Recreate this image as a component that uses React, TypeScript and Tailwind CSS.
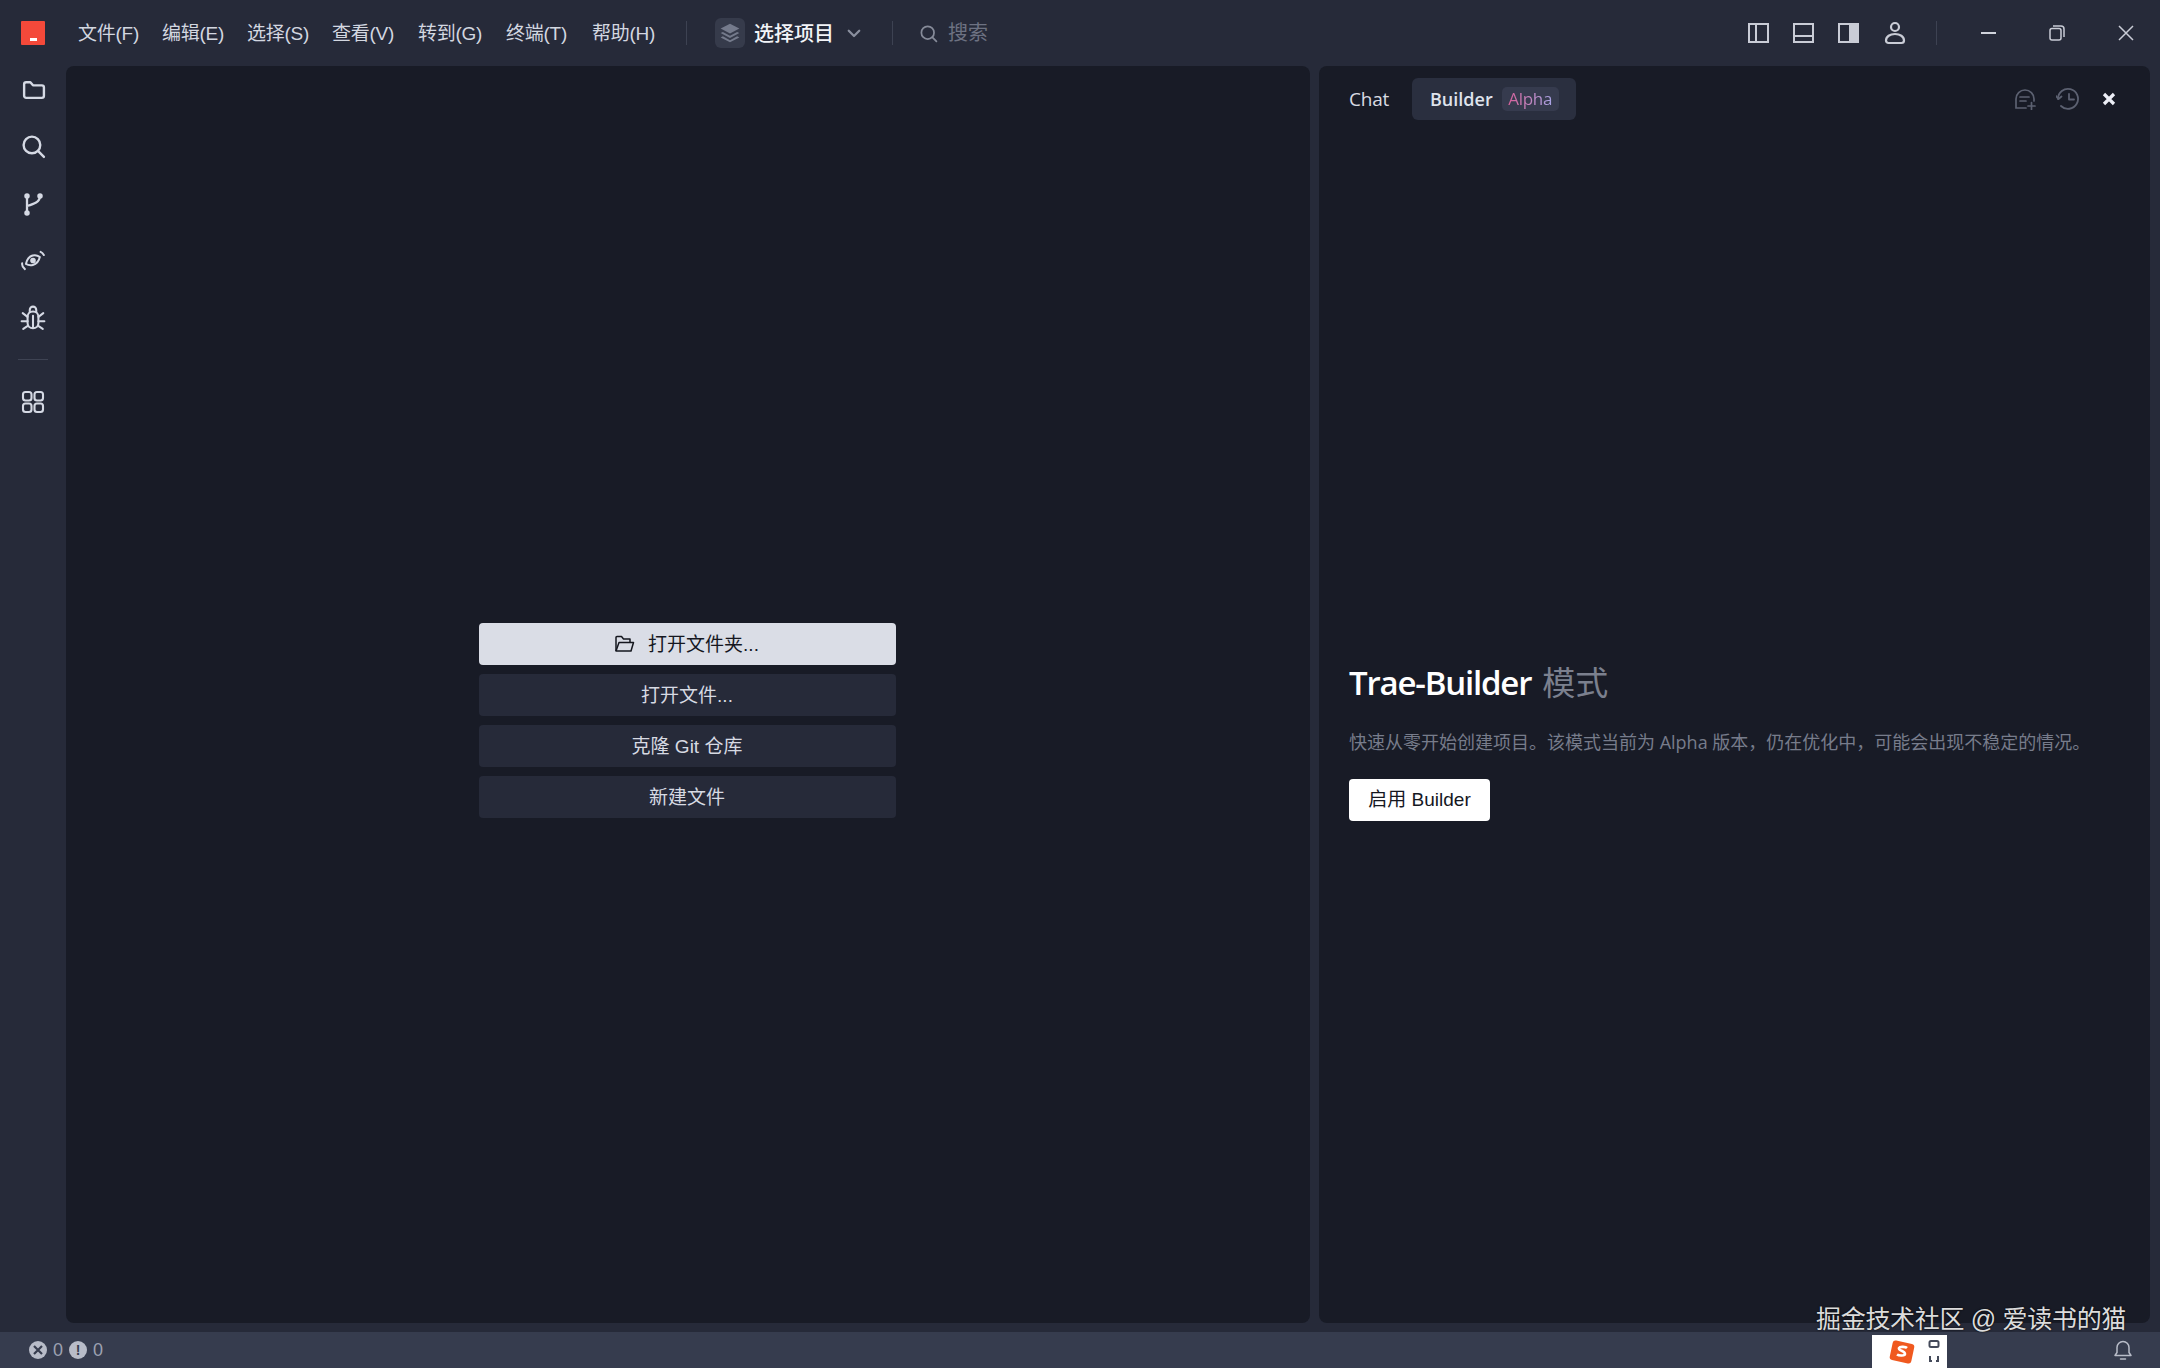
import React from "react";

const menus = [
  { t: "文件(F)", w: "w-[84px]" },
  { t: "编辑(E)", w: "w-[85px]" },
  { t: "选择(S)", w: "w-[85px]" },
  { t: "查看(V)", w: "w-[86px]" },
  { t: "转到(G)", w: "w-[88px]" },
  { t: "终端(T)", w: "w-[86px]" },
  { t: "帮助(H)", w: "w-[64px]" },
];

const Ico = ({ size = 24, sw = 2, className = "", children }: { size?: number; sw?: number; className?: string; children: React.ReactNode }) => (
  <svg width={size} height={size} viewBox="0 0 24 24" fill="none" stroke="currentColor" strokeWidth={sw} strokeLinecap="round" strokeLinejoin="round" className={className}>
    {children}
  </svg>
);

const Side = ({ className = "", children }: { className?: string; children: React.ReactNode }) => (
  <div className={`flex h-[57px] w-full items-center justify-center text-[#d5d9e4] ${className}`}>{children}</div>
);

const cjk = "font-['Liberation_Sans','Noto_Sans_CJK_SC',sans-serif]";

export default function App() {
  return (
    <div className={`relative flex h-[1368px] w-[2160px] flex-col overflow-hidden bg-[#262a39] ${cjk}`}>
      <header className="flex h-[66px] shrink-0 items-center">
        <div className="ml-[21px] flex h-[24px] w-[24px] items-end justify-center rounded-[1px] bg-[#f4493a] pb-[4px] pl-[1px]">
          <div className="h-[3px] w-[7px] bg-white" />
        </div>
        <nav className="ml-[33px] mt-[2px] flex w-[600px] text-[19px] leading-[28px] tracking-[-0.25px] text-[#d3d7e0]">
          {menus.map((m) => (
            <span key={m.t} className={`${m.w} shrink-0 whitespace-nowrap`}>{m.t}</span>
          ))}
        </nav>
        <div className="ml-[8px] h-[24px] w-px bg-[#3d4252]" />
        <div className="ml-[28px] flex h-[30px] w-[30px] items-center justify-center rounded-[6px] bg-[#363b4b] text-[#757b8c]">
          <svg width="22" height="22" viewBox="0 0 20 20" fill="currentColor">
            <path d="M10 1.500 18.500 6 10 10.500 1.500 6z" />
            <path d="M3.500 9 10 12.500 16.500 9 18.500 10 10 14.500 1.500 10z" />
            <path d="M3.500 13 10 16.500 16.500 13 18.500 14 10 18.500 1.500 14z" />
          </svg>
        </div>
        <span className="ml-[9px] mt-[2px] w-[80px] whitespace-nowrap text-[20px] font-medium leading-[28px] text-[#f2f4f8]">选择项目</span>
        <span className="ml-[11px] text-[#8a8f9e]">
          <Ico size={18} sw={3}><path d="m5 9 7 7 7-7" /></Ico>
        </span>
        <div className="ml-[29px] h-[24px] w-px bg-[#3d4252]" />
        <span className="ml-[26px] text-[#868b99]">
          <Ico size={19} sw={2.2}><circle cx="11" cy="11" r="8" /><path d="m17 17 5 5" /></Ico>
        </span>
        <span className="ml-[10px] text-[20px] leading-[28px] text-[#6d7282]">搜索</span>

        <div className="ml-auto flex items-center text-[#c9ccd6]">
          <svg width="22" height="22" viewBox="0 0 22 22" fill="none" stroke="currentColor" strokeWidth="2"><rect x="1" y="2" width="19" height="18" /><path d="M8 2v18" /></svg>
          <svg className="ml-[23px]" width="22" height="22" viewBox="0 0 22 22" fill="none" stroke="currentColor" strokeWidth="2"><rect x="1" y="2" width="19" height="18" /><path d="M1 14h19" /></svg>
          <svg className="ml-[23px]" width="22" height="22" viewBox="0 0 22 22" fill="none" stroke="currentColor" strokeWidth="2"><rect x="1" y="2" width="19" height="18" /><rect x="12" y="2" width="8" height="18" fill="currentColor" /></svg>
          <svg className="ml-[24px]" width="22" height="24" viewBox="0 0 22 24" fill="none" stroke="currentColor" strokeWidth="2.200"><circle cx="11" cy="6" r="4" /><path d="M2 19.500c0-4 4-6.500 9-6.500s9 2.500 9 6.500c0 1.500-1 2.500-2.500 2.500h-13C3 22 2 21 2 19.500z" /></svg>
          <div className="ml-[30px] h-[24px] w-px bg-[#3d4252]" />
          <div className="ml-[44px] h-[2px] w-[15px] bg-[#d0d3dc]" />
          <svg className="ml-[53px]" width="16" height="16" viewBox="0 0 16 16" fill="none" stroke="currentColor" strokeWidth="1.500"><rect x="1" y="3.500" width="11" height="11.500" rx="2" /><path d="M4 1h8a3 3 0 0 1 3 3v8" /></svg>
          <svg className="ml-[53px] mr-[26px]" width="16" height="16" viewBox="0 0 16 16" fill="none" stroke="currentColor" strokeWidth="1.500"><path d="m1 1 14 14M15 1 1 15" /></svg>
        </div>
      </header>

      <main className="flex min-h-0 flex-1">
        <aside className="flex w-[66px] shrink-0 flex-col items-center">
          <Side className="mt-[-5px]">
            <Ico size={25} sw={2.300}><path d="M3 7a2 2 0 0 1 2-2h4l2.500 3H20a2 2 0 0 1 2 2v8a2 2 0 0 1-2 2H5a2 2 0 0 1-2-2z" /></Ico>
          </Side>
          <Side>
            <Ico size={25} sw={2.300}><circle cx="10.500" cy="10.500" r="8" /><path d="m17 17 5 5" /></Ico>
          </Side>
          <Side>
            <Ico sw={2.300}><circle cx="6" cy="4" r="1.600" fill="currentColor" /><circle cx="6" cy="21" r="1.600" fill="currentColor" /><circle cx="19" cy="4" r="1.600" fill="currentColor" /><path d="M6 4v17M19 4c0 6-6 8-13 10" /></Ico>
          </Side>
          <Side>
            <Ico size={26} sw={1.800}><path d="M5 13c2-4 5-6 8-6s4.500 1 6 3c-2 4-5 5.500-8 5.500S6.500 14.500 5 13z" transform="rotate(-14 12 12)" /><circle cx="12" cy="11.500" r="1.700" fill="currentColor" /><path d="M19 3.500c1.300.6 2.300 1.600 3 3M2 14c-.3 2 .5 4 2.500 5.500" /></Ico>
          </Side>
          <Side>
            <Ico size={26} sw={1.900}><path d="M7 11c0-3 2.200-5 5-5s5 2 5 5v5.500c0 3-2.200 5-5 5s-5-2-5-5z" /><path d="M9 6.500V4.500a3 3 0 0 1 6 0v2M12 10v11M7 11 2.500 7.500M17 11l4.500-3.500M7 15H1.500M17 15h5.500M7.500 19l-4.500 3M16.500 19l4.500 3" /></Ico>
          </Side>
          <div className="mt-[13px] h-px w-[30px] bg-[#3e4353]" />
          <div className="mt-[30px] text-[#d5d9e4]">
            <Ico sw={2.100}><rect x="2" y="2" width="8.500" height="8.500" rx="2.500" /><rect x="13.500" y="2" width="8.500" height="8.500" rx="2.500" /><rect x="2" y="13.500" width="8.500" height="8.500" rx="2.500" /><rect x="13.500" y="13.500" width="8.500" height="8.500" rx="2.500" /></Ico>
          </div>
        </aside>

        <div className="mb-[9px] flex min-h-0 flex-1 gap-[9px] pr-[10px]">
          <section className="flex w-[1244px] shrink-0 flex-col items-center justify-start rounded-[8px] bg-[#181b26] pr-[2px] pt-[557px]">
            <div className="flex w-[417px] flex-col gap-[9px] text-[19px] text-[#d7dae3]">
              <button className="flex h-[42px] items-center justify-center rounded-[4px] bg-[#dadde6] text-[#15171f]">
                <svg className="mr-[13px]" width="20" height="18" viewBox="0 0 20 18" fill="none" stroke="currentColor" strokeWidth="1.500" strokeLinejoin="round"><path d="M1 16V2.500A1 1 0 0 1 2 1.500h4.500l2 2.500H15v3" /><path d="M1 16l3-8.500h14.500L16 16z" /></svg>
                <span className="mt-[2px]">打开文件夹...</span>
              </button>
              <button className="flex h-[42px] items-center justify-center rounded-[4px] bg-[#262a39] pt-[2px]">打开文件...</button>
              <button className="flex h-[42px] items-center justify-center rounded-[4px] bg-[#262a39] pt-[2px]">克隆 Git 仓库</button>
              <button className="flex h-[42px] items-center justify-center rounded-[4px] bg-[#262a39] pt-[2px]">新建文件</button>
            </div>
          </section>

          <section className="flex min-w-0 flex-1 flex-col rounded-[8px] bg-[#181b26] pl-[30px]">
            <div className="mt-[12px] flex h-[42px] shrink-0 items-center">
              <span className="mt-[1px] w-[40px] font-['Open_Sans','Noto_Sans_CJK_SC',sans-serif] text-[19px] tracking-[-0.2px] text-[#d8dbe3]">Chat</span>
              <div className="ml-[23px] flex h-[42px] w-[164px] items-center rounded-[6px] bg-[#2a2f3f] pl-[18px]">
                <span className="mt-[1px] font-['Open_Sans','Noto_Sans_CJK_SC',sans-serif] text-[18px] font-semibold text-[#dfe3ec]">Builder</span>
                <span className="ml-[9px] flex h-[24px] w-[57px] items-center justify-center rounded-[5px] bg-[#363b4e]">
                  <span className="bg-gradient-to-r from-[#d4609a] to-[#a8a4e6] bg-clip-text font-['Open_Sans',sans-serif] text-[17px] tracking-[-0.3px] text-transparent">Alpha</span>
                </span>
              </div>
              <span className="ml-[438px] text-[#5c6171]">
                <svg width="22" height="22" viewBox="0 0 22 22" fill="none" stroke="currentColor" strokeWidth="1.700" strokeLinecap="round"><path d="M12 20H2V11a9 9 0 0 1 18 0v2" /><path d="M6 9h9M6 13h6M14 18h7M17.500 14.500v7" /></svg>
              </span>
              <span className="ml-[20px] text-[#5c6171]">
                <svg width="24" height="24" viewBox="0 0 24 24" fill="none" stroke="currentColor" strokeWidth="1.800" strokeLinecap="round" strokeLinejoin="round"><path d="M2 12a10 10 0 1 1 3 7" /><path d="m0 9 2.500 3L5.500 9.500" /><path d="M13 7v5.500h5" /></svg>
              </span>
              <span className="ml-[22px] text-[#eceef6]">
                <svg width="14" height="14" viewBox="0 0 14 14" fill="none" stroke="currentColor" strokeWidth="3.200"><path d="m2 2 10 10M12 2 2 12" /></svg>
              </span>
            </div>
            <div className="mt-[540px] flex h-[46px] items-center whitespace-nowrap font-['Open_Sans','Noto_Sans_CJK_SC',sans-serif] text-[33px]">
              <span className="font-semibold tracking-[-1.2px] text-white">Trae-Builder</span>
              <span className="ml-[11px] text-[#7b808e]">模式</span>
            </div>
            <p className="mt-[22px] whitespace-nowrap font-['Open_Sans','Noto_Sans_CJK_SC',sans-serif] text-[18px] leading-[28px] text-[#777c8b]">快速从零开始创建项目。该模式当前为 Alpha 版本，仍在优化中，可能会出现不稳定的情况。</p>
            <button className="mt-[23px] flex h-[42px] w-[141px] items-center justify-center rounded-[4px] bg-white pt-[1px] text-[19px] text-[#15171f]">启用 Builder</button>
          </section>
        </div>
      </main>

      <footer className="flex h-[36px] shrink-0 items-center bg-[#363c4e] pl-[29px] text-[18px] text-[#9ca1b1]">
        <span className="flex h-[18px] w-[18px] items-center justify-center rounded-full bg-[#b8bcc8] text-[#363c4e]">
          <svg width="10" height="10" viewBox="0 0 10 10" fill="none" stroke="currentColor" strokeWidth="2.200"><path d="m1 1 8 8M9 1 1 9" /></svg>
        </span>
        <span className="ml-[6px] w-[13px]">0</span>
        <span className="ml-[3px] flex h-[18px] w-[18px] items-center justify-center rounded-full bg-[#b8bcc8] text-[14px] font-bold text-[#363c4e]">!</span>
        <span className="ml-[6px]">0</span>
        <span className="ml-auto mr-[27px] text-[#b8bcc8]">
          <svg width="20" height="22" viewBox="0 0 20 22" fill="none" stroke="currentColor" strokeWidth="1.500" strokeLinecap="round" strokeLinejoin="round"><path d="M2 16.500h16l-2-3V8.500a6 6 0 0 0-12 0v5z" /><path d="M7.500 20h5" /></svg>
        </span>
      </footer>

      <div className="absolute left-[1816px] top-[1302px] whitespace-nowrap text-[25px] leading-[34px] tracking-[-0.3px] text-[#dcdcdc] [text-shadow:0_0_2px_#000]">
        掘金技术社区 @ 爱读书的猫
      </div>
      <div className="absolute left-[1872px] top-[1335px] flex h-[33px] w-[75px] items-center bg-white">
        <svg className="ml-[17px]" width="26" height="26" viewBox="0 0 26 26">
          <rect x="2" y="3" width="22" height="20" rx="3" fill="#f0591f" transform="rotate(12 13 13)" />
          <path d="M18 9c-1-1-7-2-8 0-1 3 6 2.500 6 6 0 2-6 2-8 .5" fill="none" stroke="#fff" strokeWidth="2.600" />
        </svg>
        <svg className="ml-[13px]" width="12" height="26" viewBox="0 0 12 26" fill="none" stroke="#444a5a" strokeWidth="2">
          <rect x="1.500" y="2" width="9" height="6" rx="1.500" />
          <path d="M2 17v5h2M10 17v5H8" />
        </svg>
      </div>
    </div>
  );
}
